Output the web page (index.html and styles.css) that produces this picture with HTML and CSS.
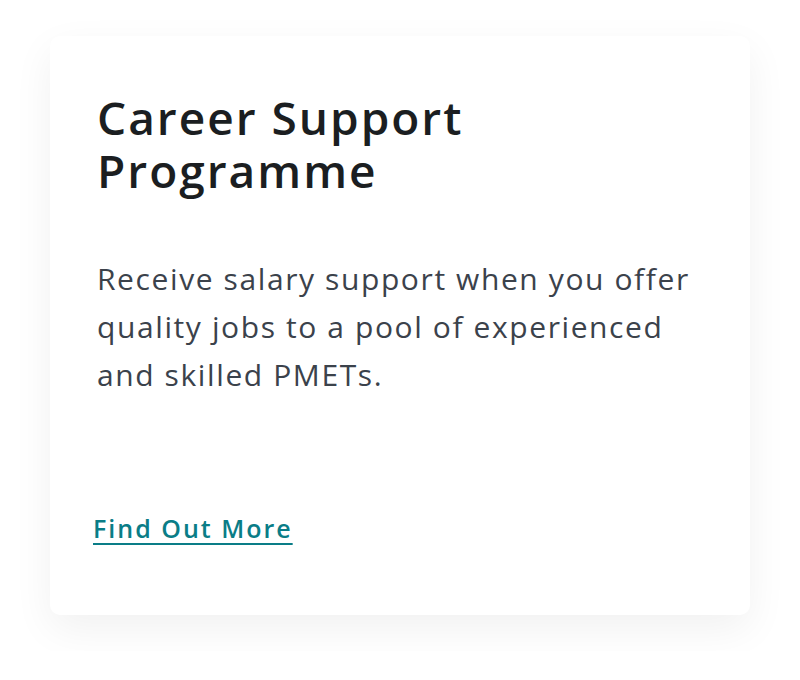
FILE: index.html
```html
<!DOCTYPE html>
<html lang="en">
<head>
<meta charset="utf-8">
<title>Career Support Programme</title>
<link rel="stylesheet" href="styles.css">
</head>
<body>
<main class="page">
  <article class="card">
    <h2 class="card-title">Career Support Programme</h2>
    <p class="card-text">Receive salary support when you offer quality jobs to a pool of experienced and skilled PMETs.</p>
    <a class="card-link" href="#">Find Out More</a>
  </article>
</main>
</body>
</html>
```

FILE: styles.css
```css
html, body {
  margin: 0;
  padding: 0;
  background: #ffffff;
}

.page {
  padding: 36px 50px;
  font-family: "Open Sans", "Lato", sans-serif;
}

.card {
  width: 700px;
  height: 579px;
  box-sizing: border-box;
  padding: 55px 47px 0 47px;
  background: #ffffff;
  border-radius: 10px;
  box-shadow: 0 14px 40px rgba(0, 0, 0, 0.06);
  display: flex;
  flex-direction: column;
}

.card-title {
  margin: 0;
  width: 440px;
  font-size: 46px;
  line-height: 53px;
  font-weight: 600;
  letter-spacing: 2px;
  color: #1b1e21;
}

.card-text {
  margin: 58px 0 0 0;
  font-size: 30px;
  line-height: 48px;
  font-weight: 400;
  letter-spacing: 1.6px;
  color: #3b424b;
}

.card-link {
  margin: 111px 0 0 -4px;
  align-self: flex-start;
  font-size: 25px;
  line-height: 36px;
  font-weight: 600;
  letter-spacing: 2px;
  color: #0a7d87;
  text-decoration: underline;
  text-decoration-thickness: 2px;
  text-underline-offset: 5px;
}
```
